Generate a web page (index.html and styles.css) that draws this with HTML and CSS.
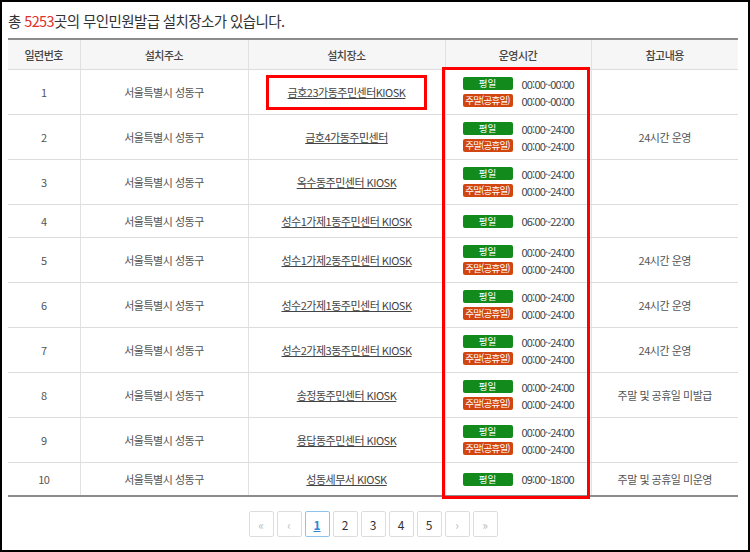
FILE: index.html
```html
<!DOCTYPE html>
<html lang="ko">
<head>
<meta charset="utf-8">
<title>무인민원발급 설치장소</title>
<link rel="stylesheet" href="styles.css">
</head>
<body>
<div class="frame">
  <p class="title">총 <span class="count">5253</span>곳의 무인민원발급 설치장소가 있습니다.</p>
  <div class="table-wrap">
    <table class="list">
      <colgroup>
        <col class="c-no"><col class="c-addr"><col class="c-place"><col class="c-time"><col class="c-note">
      </colgroup>
      <thead>
        <tr><th>일련번호</th><th>설치주소</th><th>설치장소</th><th>운영시간</th><th>참고내용</th></tr>
      </thead>
      <tbody>
        <tr class="two">
          <td>1</td><td>서울특별시 성동구</td>
          <td><span class="hl"><a href="#">금호23가동주민센터KIOSK</a></span></td>
          <td><div class="times">
            <div class="tl"><span class="badge wd">평일</span><span class="tm">00:00~00:00</span></div>
            <div class="tl"><span class="badge we">주말(공휴일)</span><span class="tm">00:00~00:00</span></div>
          </div></td>
          <td></td>
        </tr>
        <tr class="two">
          <td>2</td><td>서울특별시 성동구</td>
          <td><a href="#">금호4가동주민센터</a></td>
          <td><div class="times">
            <div class="tl"><span class="badge wd">평일</span><span class="tm">00:00~24:00</span></div>
            <div class="tl"><span class="badge we">주말(공휴일)</span><span class="tm">00:00~24:00</span></div>
          </div></td>
          <td>24시간 운영</td>
        </tr>
        <tr class="two">
          <td>3</td><td>서울특별시 성동구</td>
          <td><a href="#">옥수동주민센터 KIOSK</a></td>
          <td><div class="times">
            <div class="tl"><span class="badge wd">평일</span><span class="tm">00:00~24:00</span></div>
            <div class="tl"><span class="badge we">주말(공휴일)</span><span class="tm">00:00~24:00</span></div>
          </div></td>
          <td></td>
        </tr>
        <tr class="one">
          <td>4</td><td>서울특별시 성동구</td>
          <td><a href="#">성수1가제1동주민센터 KIOSK</a></td>
          <td><div class="times">
            <div class="tl"><span class="badge wd">평일</span><span class="tm">06:00~22:00</span></div>
          </div></td>
          <td></td>
        </tr>
        <tr class="two">
          <td>5</td><td>서울특별시 성동구</td>
          <td><a href="#">성수1가제2동주민센터 KIOSK</a></td>
          <td><div class="times">
            <div class="tl"><span class="badge wd">평일</span><span class="tm">00:00~24:00</span></div>
            <div class="tl"><span class="badge we">주말(공휴일)</span><span class="tm">00:00~24:00</span></div>
          </div></td>
          <td>24시간 운영</td>
        </tr>
        <tr class="two">
          <td>6</td><td>서울특별시 성동구</td>
          <td><a href="#">성수2가제1동주민센터 KIOSK</a></td>
          <td><div class="times">
            <div class="tl"><span class="badge wd">평일</span><span class="tm">00:00~24:00</span></div>
            <div class="tl"><span class="badge we">주말(공휴일)</span><span class="tm">00:00~24:00</span></div>
          </div></td>
          <td>24시간 운영</td>
        </tr>
        <tr class="two">
          <td>7</td><td>서울특별시 성동구</td>
          <td><a href="#">성수2가제3동주민센터 KIOSK</a></td>
          <td><div class="times">
            <div class="tl"><span class="badge wd">평일</span><span class="tm">00:00~24:00</span></div>
            <div class="tl"><span class="badge we">주말(공휴일)</span><span class="tm">00:00~24:00</span></div>
          </div></td>
          <td>24시간 운영</td>
        </tr>
        <tr class="two">
          <td>8</td><td>서울특별시 성동구</td>
          <td><a href="#">송정동주민센터 KIOSK</a></td>
          <td><div class="times">
            <div class="tl"><span class="badge wd">평일</span><span class="tm">00:00~24:00</span></div>
            <div class="tl"><span class="badge we">주말(공휴일)</span><span class="tm">00:00~24:00</span></div>
          </div></td>
          <td>주말 및 공휴일 미발급</td>
        </tr>
        <tr class="two">
          <td>9</td><td>서울특별시 성동구</td>
          <td><a href="#">용답동주민센터 KIOSK</a></td>
          <td><div class="times">
            <div class="tl"><span class="badge wd">평일</span><span class="tm">00:00~24:00</span></div>
            <div class="tl"><span class="badge we">주말(공휴일)</span><span class="tm">00:00~24:00</span></div>
          </div></td>
          <td></td>
        </tr>
        <tr class="one">
          <td>10</td><td>서울특별시 성동구</td>
          <td><a href="#">성동세무서 KIOSK</a></td>
          <td><div class="times">
            <div class="tl"><span class="badge wd">평일</span><span class="tm">09:00~18:00</span></div>
          </div></td>
          <td>주말 및 공휴일 미운영</td>
        </tr>
      </tbody>
    </table>
    <div class="col-mark"></div>
  </div>
  <nav class="paging">
    <a class="pg dis" href="#">&laquo;</a>
    <a class="pg dis" href="#">&lsaquo;</a>
    <a class="pg on" href="#">1</a>
    <a class="pg" href="#">2</a>
    <a class="pg" href="#">3</a>
    <a class="pg" href="#">4</a>
    <a class="pg" href="#">5</a>
    <a class="pg dis" href="#">&rsaquo;</a>
    <a class="pg dis" href="#">&raquo;</a>
  </nav>
</div>
</body>
</html>
```

FILE: styles.css
```css
html, body {
  margin: 0;
  padding: 0;
  background: #fff;
}
.frame {
  width: 750px;
  height: 552px;
  box-sizing: border-box;
  border: 2px solid #000;
  padding: 8px 10px 0 6px;
  font-family: "Noto Sans CJK KR", "Noto Sans", sans-serif;
  color: #555;
}
.title {
  margin: 0 0 6px;
  font-size: 14.5px;
  line-height: 22px;
  letter-spacing: -0.6px;
  color: #333;
}
.count {
  color: #e0312b;
}
.table-wrap {
  position: relative;
}
.list {
  width: 730px;
  border-collapse: collapse;
  table-layout: fixed;
  border-top: 2px solid #8c8c8c;
  border-bottom: 2px solid #8c8c8c;
  font-size: 11px;
  letter-spacing: -0.5px;
}
.c-no { width: 72px; }
.c-addr { width: 168px; }
.c-place { width: 197px; }
.c-time { width: 146px; }
.c-note { width: 147px; }
.list th {
  height: 29px;
  padding: 0;
  background: #f6f6f6;
  font-weight: 500;
  color: #444;
  border-bottom: 1px solid #ddd;
  border-left: 1px solid #e2e2e2;
}
.list td {
  padding: 0;
  text-align: center;
  vertical-align: middle;
  border-bottom: 1px solid #ddd;
  border-left: 1px solid #e2e2e2;
}
.list th:first-child, .list td:first-child {
  border-left: none;
}
.list tr.two td { height: 44px; }
.list tr.one td { height: 32px; }
.list a {
  color: #444;
  text-decoration: underline;
}
.hl {
  display: inline-block;
  border: 3px solid #f00;
  padding: 7px 19px 7px 19px;
  line-height: 15px;
}
.times {
  display: flex;
  flex-direction: column;
  align-items: center;
  gap: 3px;
}
.tl {
  display: flex;
  align-items: center;
  gap: 9px;
  height: 14px;
}
.badge {
  flex: 0 0 50px;
  width: 50px;
  height: 13px;
  border-radius: 2px;
  color: #fff;
  font-size: 9.5px;
  line-height: 13px;
  letter-spacing: -0.8px;
  text-align: center;
  white-space: nowrap;
  overflow: hidden;
}
.badge.wd { background: #138a1c; letter-spacing: 0; }
.badge.we { background: #d1460f; }
.tm {
  width: 52px;
  text-align: left;
  font-size: 11px;
  letter-spacing: -0.8px;
  color: #444;
  white-space: nowrap;
}
.col-mark {
  position: absolute;
  left: 434px;
  top: 29px;
  width: 142px;
  height: 426px;
  border: 3px solid #f00;
  pointer-events: none;
}
.paging {
  display: flex;
  justify-content: center;
  gap: 3px;
  margin-top: 14px;
}
.pg {
  width: 23px;
  height: 24px;
  border: 1px solid #ddd;
  border-radius: 2px;
  display: flex;
  align-items: center;
  justify-content: center;
  font-size: 12px;
  color: #333;
  text-decoration: none;
}
.pg.dis { color: #bbb; }
.pg.on {
  border-color: #8cc4ef;
  color: #2f86d6;
  font-weight: 700;
  text-decoration: underline;
}
```
